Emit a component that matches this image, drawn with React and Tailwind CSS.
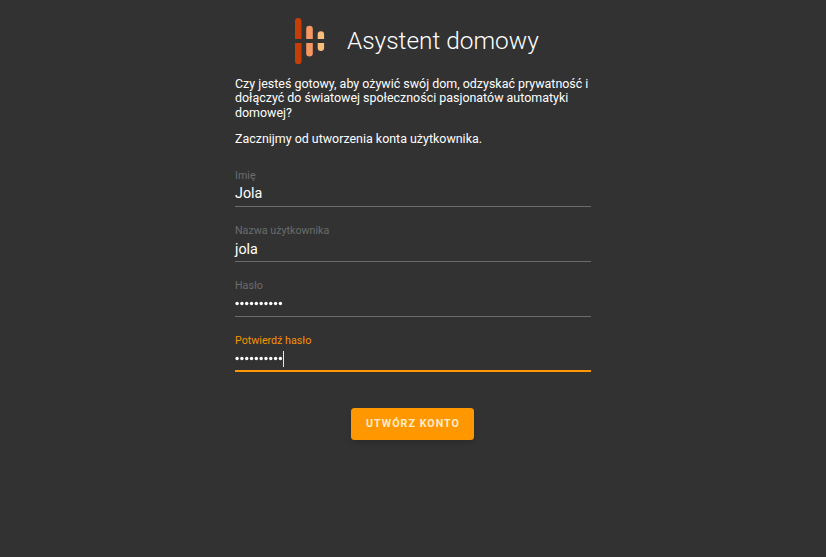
const fields = [
  { label: "Imię", value: "Jola" },
  { label: "Nazwa użytkownika", value: "jola", lowered: true },
  { label: "Hasło", secret: 10 },
  { label: "Potwierdź hasło", secret: 10, active: true },
];

function Logo() {
  return (
    <svg width="30" height="47" viewBox="0 0 30 47" className="shrink-0">
      <path d="M0 21V3.200a3.200 3.200 0 0 1 6.500 0V21z" fill="#c43e05" />
      <path d="M0 25v18a3.200 3.200 0 0 0 6.500 0V25z" fill="#c43e05" />
      <path d="M11.200 21v-10a3.300 3.300 0 0 1 6.600 0v10z" fill="#f79762" />
      <path d="M11.200 25v10.200a3.300 3.300 0 0 0 6.600 0V25z" fill="#f79762" />
      <path d="M22.700 21v-4.600a3.200 3.200 0 0 1 6.400 0V21z" fill="#fbbd7c" />
      <path d="M22.700 25v4.800a3.200 3.200 0 0 0 6.400 0V25z" fill="#fbbd7c" />
    </svg>
  );
}

function MaskedValue({ length }) {
  return (
    <svg width="48" height="16" viewBox="0 0 48 16" className="shrink-0">
      {Array.from({ length }, (_, i) => (
        <circle key={i} cx={2.1 + i * 4.81} cy="7.500" r="1.700" fill="#fff" />
      ))}
    </svg>
  );
}

function Field({ label, value, secret, active, lowered }) {
  return (
    <div className="h-[55px]">
      <div className={`text-[10.700px] leading-[14px] ${active ? "text-[#f79300]" : "text-[#6c6c6c]"}`}>{label}</div>
      <div
        className={`flex h-[24px] items-center text-[14.300px] leading-[22px] text-white ${
          active ? "border-b-2 border-[#ff9800]" : "border-b border-[#6c6c6c]"
        } ${lowered ? "pt-[1.500px]" : ""}`}
      >
        {secret ? <MaskedValue length={secret} /> : <span className="-translate-y-px">{value}</span>}
        {active && <span className="h-4 w-px bg-[#e8e8e8]" />}
      </div>
    </div>
  );
}

export default function App() {
  return (
    <main className="flex h-[557px] flex-col items-center overflow-hidden bg-[#323232] pt-[18px] font-['Roboto',sans-serif] text-white">
      <header className="flex h-[47px] w-[356px] items-center gap-[22px] pl-[60px]">
        <Logo />
        <h1 className="pb-[2px] text-[24.400px] leading-[45px] font-light whitespace-nowrap">Asystent domowy</h1>
      </header>
      <section className="w-[356px] pt-[12px] text-[12.450px] leading-[14.300px]">
        <p className="whitespace-nowrap">
          Czy jesteś gotowy, aby ożywić swój dom, odzyskać prywatność i<br />
          dołączyć do światowej społeczności pasjonatów automatyki<br />
          domowej?
        </p>
        <p className="mt-[12px]">Zacznijmy od utworzenia konta użytkownika.</p>
        <form className="pt-[22.800px]">
          {fields.map((field) => (
            <Field key={field.label} {...field} />
          ))}
        </form>
      </section>
      <button className="mt-[19px] mr-px h-8 w-[123px] rounded-[3.500px] bg-[#ff9800] pl-px text-[10.700px] font-bold tracking-[1.020px] text-[#ffebcc] shadow-md">
        UTWÓRZ KONTO
      </button>
    </main>
  );
}
